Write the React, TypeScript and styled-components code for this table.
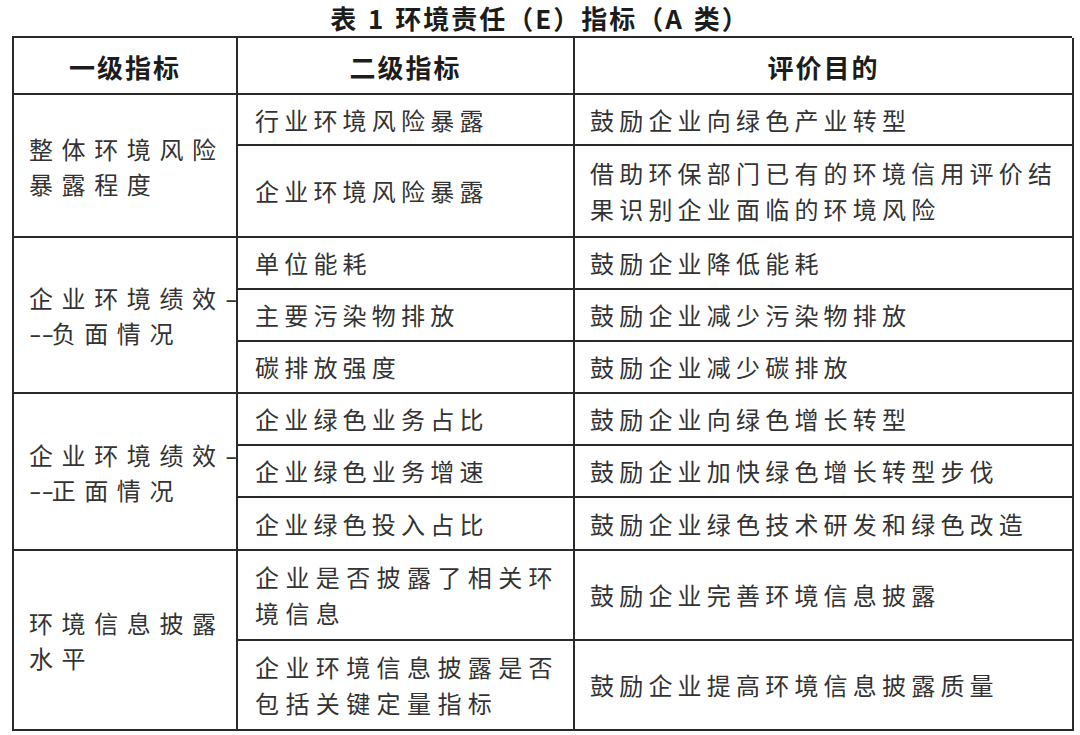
import React from "react";
import styled, { createGlobalStyle } from "styled-components";

type Item = { sub: string[]; goal: string[]; height: number };
type Group = { name: string[]; items: Item[] };

const groups: Group[] = [
  {
    name: ["整体环境风险", "暴露程度"],
    items: [
      { sub: ["行业环境风险暴露"], goal: ["鼓励企业向绿色产业转型"], height: 51 },
      {
        sub: ["企业环境风险暴露"],
        goal: ["借助环保部门已有的环境信用评价结", "果识别企业面临的环境风险"],
        height: 92,
      },
    ],
  },
  {
    name: ["企业环境绩效-", "--负面情况"],
    items: [
      { sub: ["单位能耗"], goal: ["鼓励企业降低能耗"], height: 52 },
      { sub: ["主要污染物排放"], goal: ["鼓励企业减少污染物排放"], height: 52 },
      { sub: ["碳排放强度"], goal: ["鼓励企业减少碳排放"], height: 52 },
    ],
  },
  {
    name: ["企业环境绩效-", "--正面情况"],
    items: [
      { sub: ["企业绿色业务占比"], goal: ["鼓励企业向绿色增长转型"], height: 52 },
      { sub: ["企业绿色业务增速"], goal: ["鼓励企业加快绿色增长转型步伐"], height: 52 },
      { sub: ["企业绿色投入占比"], goal: ["鼓励企业绿色技术研发和绿色改造"], height: 53 },
    ],
  },
  {
    name: ["环境信息披露", "水平"],
    items: [
      {
        sub: ["企业是否披露了相关环", "境信息"],
        goal: ["鼓励企业完善环境信息披露"],
        height: 90,
      },
      {
        sub: ["企业环境信息披露是否", "包括关键定量指标"],
        goal: ["鼓励企业提高环境信息披露质量"],
        height: 90,
      },
    ],
  },
];

const rowHeights = [55, ...groups.flatMap((g) => g.items.map((i) => i.height))];

// dashes sit tight together in the source, so split them out of the spaced text
const renderLine = (line: string) =>
  line.split(/(-+)/).map((part, i) =>
    part.startsWith("-") ? <Dash key={i}>{part}</Dash> : <React.Fragment key={i}>{part}</React.Fragment>
  );

const App = () => {
  let row = 2;
  return (
    <Page>
      <GlobalStyle />
      <Title>表 1 环境责任（E）指标（A 类）</Title>
      <Table $rows={rowHeights}>
        <HeadCell $col={1}>一级指标</HeadCell>
        <HeadCell $col={2}>二级指标</HeadCell>
        <HeadCell $col={3}>评价目的</HeadCell>
        {groups.map((group, gi) => {
          const start = row;
          row += group.items.length;
          return (
            <React.Fragment key={gi}>
              <GroupCell $row={start} $span={group.items.length}>
                {group.name.map((line) => (
                  <Line key={line}>{renderLine(line)}</Line>
                ))}
              </GroupCell>
              {group.items.map((item, ii) => (
                <React.Fragment key={ii}>
                  <Cell $col={2} $row={start + ii} $pad={17} $wide={item.sub.length > 1}>
                    {item.sub.map((line) => (
                      <Line key={line}>{line}</Line>
                    ))}
                  </Cell>
                  <Cell $col={3} $row={start + ii} $pad={15}>
                    {item.goal.map((line) => (
                      <Line key={line}>{line}</Line>
                    ))}
                  </Cell>
                </React.Fragment>
              ))}
            </React.Fragment>
          );
        })}
      </Table>
    </Page>
  );
};

export default App;

const GlobalStyle = createGlobalStyle`
  html, body {
    margin: 0;
    padding: 0;
    background: #ffffff;
  }
  body {
    font-family: "Noto Sans CJK SC", "Noto Sans", sans-serif;
    color: #333;
  }
`;

const Page = styled.div`
  width: 1080px;
  height: 735px;
  padding-left: 12px;
  box-sizing: border-box;
  overflow: hidden;
`;

const Title = styled.div`
  width: 1060px;
  height: 36px;
  line-height: 36px;
  text-align: center;
  font-size: 26px;
  font-weight: 700;
  letter-spacing: 2px;
  word-spacing: 2px;
  color: #1c1c1c;
  padding-right: 4px;
  box-sizing: border-box;
`;

const Table = styled.div<{ $rows: number[] }>`
  display: grid;
  width: 1060px;
  box-sizing: border-box;
  grid-template-columns: 224px 337px 499px;
  grid-template-rows: ${(p) => p.$rows.map((h, i) => `${i === 0 ? h + 2 : h}px`).join(" ")};
  border-top: 2px solid #2a2a2a;
  border-left: 2px solid #2a2a2a;
`;

const BaseCell = styled.div`
  display: flex;
  flex-direction: column;
  justify-content: center;
  box-sizing: border-box;
  border-right: 2px solid #2a2a2a;
  border-bottom: 2px solid #2a2a2a;
  min-width: 0;
  overflow: hidden;
`;

const HeadCell = styled(BaseCell)<{ $col: number }>`
  grid-column: ${(p) => p.$col};
  grid-row: 1;
  align-items: center;
  font-size: 26px;
  font-weight: 700;
  letter-spacing: 2px;
  color: #1c1c1c;
  padding-top: 2px;
`;

const GroupCell = styled(BaseCell)<{ $row: number; $span: number }>`
  grid-column: 1;
  grid-row: ${(p) => p.$row} / span ${(p) => p.$span};
  padding-left: 15px;
  font-size: 24px;
  line-height: 35px;
  letter-spacing: 8.6px;
  color: #333;
  white-space: nowrap;
`;

const Cell = styled(BaseCell)<{ $col: number; $row: number; $pad: number; $wide?: boolean }>`
  grid-column: ${(p) => p.$col};
  grid-row: ${(p) => p.$row};
  padding-left: ${(p) => p.$pad}px;
  font-size: 24px;
  line-height: 36px;
  letter-spacing: ${(p) => (p.$wide ? "6.4px" : "5.2px")};
  color: #333;
  white-space: nowrap;
`;

const Line = styled.span`
  display: block;
`;

const Dash = styled.span`
  letter-spacing: 0;
  display: inline-block;
  transform: scaleX(1.5);
  transform-origin: left center;
  margin-right: 6px;
`;
